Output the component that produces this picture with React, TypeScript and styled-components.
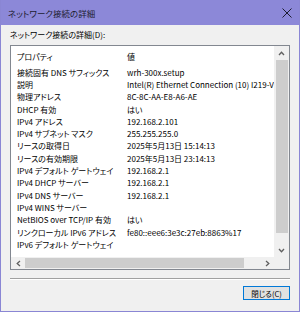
import styled, { createGlobalStyle } from 'styled-components';

const GlobalStyle = createGlobalStyle`
  html, body {
    margin: 0;
    padding: 0;
    background: #f0f0f0;
  }
  body {
    font-family: 'Noto Sans CJK JP', 'Noto Sans', sans-serif;
    font-feature-settings: 'palt';
    color: #000;
  }
`;

const rows: [string, string][] = [
  ['接続固有 DNS サフィックス', 'wrh-300x.setup'],
  ['説明', 'Intel(R) Ethernet Connection (10) I219-V'],
  ['物理アドレス', '8C-8C-AA-E8-A6-AE'],
  ['DHCP 有効', 'はい'],
  ['IPv4 アドレス', '192.168.2.101'],
  ['IPv4 サブネット マスク', '255.255.255.0'],
  ['リースの取得日', '2025年5月13日 15:14:13'],
  ['リースの有効期限', '2025年5月13日 23:14:13'],
  ['IPv4 デフォルト ゲートウェイ', '192.168.2.1'],
  ['IPv4 DHCP サーバー', '192.168.2.1'],
  ['IPv4 DNS サーバー', '192.168.2.1'],
  ['IPv4 WINS サーバー', ''],
  ['NetBIOS over TCP/IP 有効', 'はい'],
  ['リンクローカル IPv6 アドレス', 'fe80::eee6:3e3c:27eb:8863%17'],
  ['IPv6 デフォルト ゲートウェイ', ''],
];

const Window = styled.div`
  width: 300px;
  height: 312px;
  box-sizing: border-box;
  border: 1px solid #8a86d4;
  border-top: none;
  display: flex;
  flex-direction: column;
  overflow: hidden;
`;

const TitleBar = styled.div`
  height: 25px;
  flex: none;
  background: #8c88d8;
  display: flex;
  align-items: center;
  justify-content: space-between;
  padding: 0 7px 0 7px;
  font-size: 8.5px;
  color: #1c1c30;
`;

const Body = styled.div`
  flex: 1;
  display: flex;
  flex-direction: column;
  padding: 4px 9px 0 9px;
`;

const Label = styled.div`
  font-size: 8px;
  line-height: 12px;
  height: 16px;
`;

const ListBox = styled.div`
  height: 225px;
  box-sizing: border-box;
  border: 1px solid #828790;
  background: #fff;
  display: grid;
  grid-template-columns: 1fr 15px;
  grid-template-rows: 1fr 12px;
  overflow: hidden;
`;

const Content = styled.div`
  overflow: hidden;
  display: flex;
  flex-direction: column;
`;

const Row = styled.div<{ $header?: boolean }>`
  display: grid;
  grid-template-columns: 110px 1fr;
  height: ${(p) => (p.$header ? '20px' : '12.3px')};
  align-items: center;
  font-size: 8px;
  white-space: nowrap;
  flex: none;
`;

const Cell = styled.div`
  padding-left: 6px;
  overflow: hidden;
  text-overflow: ellipsis;
`;

const VScroll = styled.div`
  background: #f0f0f0;
  display: flex;
  flex-direction: column;
  align-items: center;
`;

const HScroll = styled.div`
  background: #f0f0f0;
  display: flex;
  align-items: center;
`;

const Corner = styled.div`
  background: #f0f0f0;
`;

const Arrow = styled.div<{ $size: number }>`
  width: ${(p) => p.$size}px;
  height: ${(p) => p.$size}px;
  flex: none;
  display: flex;
  align-items: center;
  justify-content: center;
`;

const VThumb = styled.div`
  width: 12px;
  flex: 1;
  background: #cdcdcd;
  margin: 0 0 10px;
`;

const HThumb = styled.div`
  height: 10px;
  width: 219px;
  background: #cdcdcd;
  margin-right: auto;
`;

const Separator = styled.div`
  margin-top: 8px;
  height: 1px;
  background: #a0a0a0;
  border-bottom: 1px solid #fff;
`;

const Footer = styled.div`
  display: flex;
  justify-content: flex-end;
  padding-top: 6px;
  padding-right: 0px;
`;

const Button = styled.div`
  width: 47px;
  height: 14px;
  box-sizing: border-box;
  border: 1px solid #0078d7;
  background: #e1e1e1;
  box-shadow: inset 0 0 0 1px #e1e1e1;
  display: flex;
  align-items: center;
  justify-content: center;
  font-size: 7.5px;
`;

const Chevron = ({ dir }: { dir: 'up' | 'down' | 'left' | 'right' }) => {
  const rot = { up: 0, right: 90, down: 180, left: 270 }[dir];
  return (
    <svg width="7" height="7" viewBox="0 0 7 7" style={{ transform: `rotate(${rot}deg)` }}>
      <path d="M1 5 L3.5 2.2 L6 5" fill="none" stroke="#606060" strokeWidth="1.3" />
    </svg>
  );
};

export default function App() {
  return (
    <>
      <GlobalStyle />
      <Window>
        <TitleBar>
          <span>ネットワーク接続の詳細</span>
          <svg width="10" height="10" viewBox="0 0 10 10">
            <path d="M0.5 0.5 L9.5 9.5 M9.5 0.5 L0.5 9.5" stroke="#1c1c30" strokeWidth="1" />
          </svg>
        </TitleBar>
        <Body>
          <Label>ネットワーク接続の詳細(D):</Label>
          <ListBox>
            <Content>
              <Row $header>
                <Cell>プロパティ</Cell>
                <Cell>値</Cell>
              </Row>
              {rows.map(([k, v]) => (
                <Row key={k}>
                  <Cell>{k}</Cell>
                  <Cell>{v}</Cell>
                </Row>
              ))}
            </Content>
            <VScroll>
              <Arrow $size={14}>
                <Chevron dir="up" />
              </Arrow>
              <VThumb />
              <Arrow $size={14}>
                <Chevron dir="down" />
              </Arrow>
            </VScroll>
            <HScroll>
              <Arrow $size={14}>
                <Chevron dir="left" />
              </Arrow>
              <HThumb />
              <Arrow $size={14}>
                <Chevron dir="right" />
              </Arrow>
            </HScroll>
            <Corner />
          </ListBox>
          <Separator />
          <Footer>
            <Button>閉じる(C)</Button>
          </Footer>
        </Body>
      </Window>
    </>
  );
}
